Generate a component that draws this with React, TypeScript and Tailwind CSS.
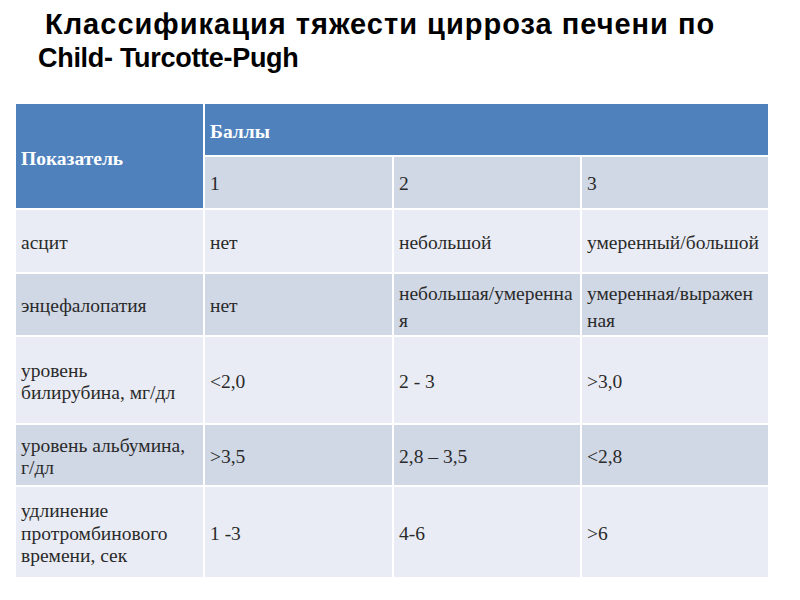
const rows = [
  { label: ["асцит"], v: [["нет"], ["небольшой"], ["умеренный/большой"]], dark: false },
  {
    label: ["энцефалопатия"],
    v: [["нет"], ["небольшая/умеренна", "я"], ["умеренная/выражен", "ная"]],
    dark: true,
    loose: true,
  },
  { label: ["уровень", "билирубина, мг/дл"], v: [["<2,0"], ["2 - 3"], [">3,0"]], dark: false },
  { label: ["уровень альбумина,", "г/дл"], v: [[">3,5"], ["2,8 – 3,5"], ["<2,8"]], dark: true },
  {
    label: ["удлинение", "протромбинового", "времени, сек"],
    v: [["1 -3"], ["4-6"], [">6"]],
    dark: false,
  },
];

const Cell = ({ lines, dark, loose }: { lines: string[]; dark: boolean; loose?: boolean }) => (
  <div
    className={`flex flex-col justify-center px-[5px] pt-[4px] font-['Liberation_Serif','DejaVu_Serif',serif] text-[19.5px] text-[#2a2a2a] ${
      loose ? "leading-[27px]" : "leading-[22.5px]"
    } ${dark ? "bg-[#d0d7e5]" : "bg-[#e9ecf4]"}`}
  >
    {lines.map((l, i) => (
      <span key={i}>{l}</span>
    ))}
  </div>
);

export default function App() {
  return (
    <div className="w-[800px] h-[600px] bg-white overflow-hidden">
      {/* Title */}
      <div className="pt-[7px] font-['Liberation_Sans',Arial,sans-serif] font-bold text-black">
        <h1 className="pl-[45px] text-[29px] leading-[34px] tracking-[1px]">
          Классификация тяжести цирроза печени по
        </h1>
        <h2 className="pl-[38px] text-[27px] leading-[34px] tracking-[-0.3px]">Child- Turcotte-Pugh</h2>
      </div>

      {/* Table */}
      <div className="ml-[16px] mt-[29px] grid grid-cols-[187px_187px_186px_186px] grid-rows-[51px_51px_62px_61px_86px_60px_90px] gap-[2px] bg-white">
        <div className="row-span-2 flex items-center px-[5px] pt-[5px] bg-[#4f81bd] text-white font-['Liberation_Serif','DejaVu_Serif',serif] font-bold text-[19.5px]">
          Показатель
        </div>
        <div className="col-span-3 flex items-center px-[5px] pt-[4px] bg-[#4f81bd] text-white font-['Liberation_Serif','DejaVu_Serif',serif] font-bold text-[19.5px]">
          Баллы
        </div>
        <Cell lines={["1"]} dark />
        <Cell lines={["2"]} dark />
        <Cell lines={["3"]} dark />

        {rows.map((r, i) => (
          <div key={i} className="contents">
            <Cell lines={r.label} dark={r.dark} />
            {r.v.map((c, j) => (
              <Cell key={j} lines={c} dark={r.dark} loose={r.loose && c.length > 1} />
            ))}
          </div>
        ))}
      </div>
    </div>
  );
}
